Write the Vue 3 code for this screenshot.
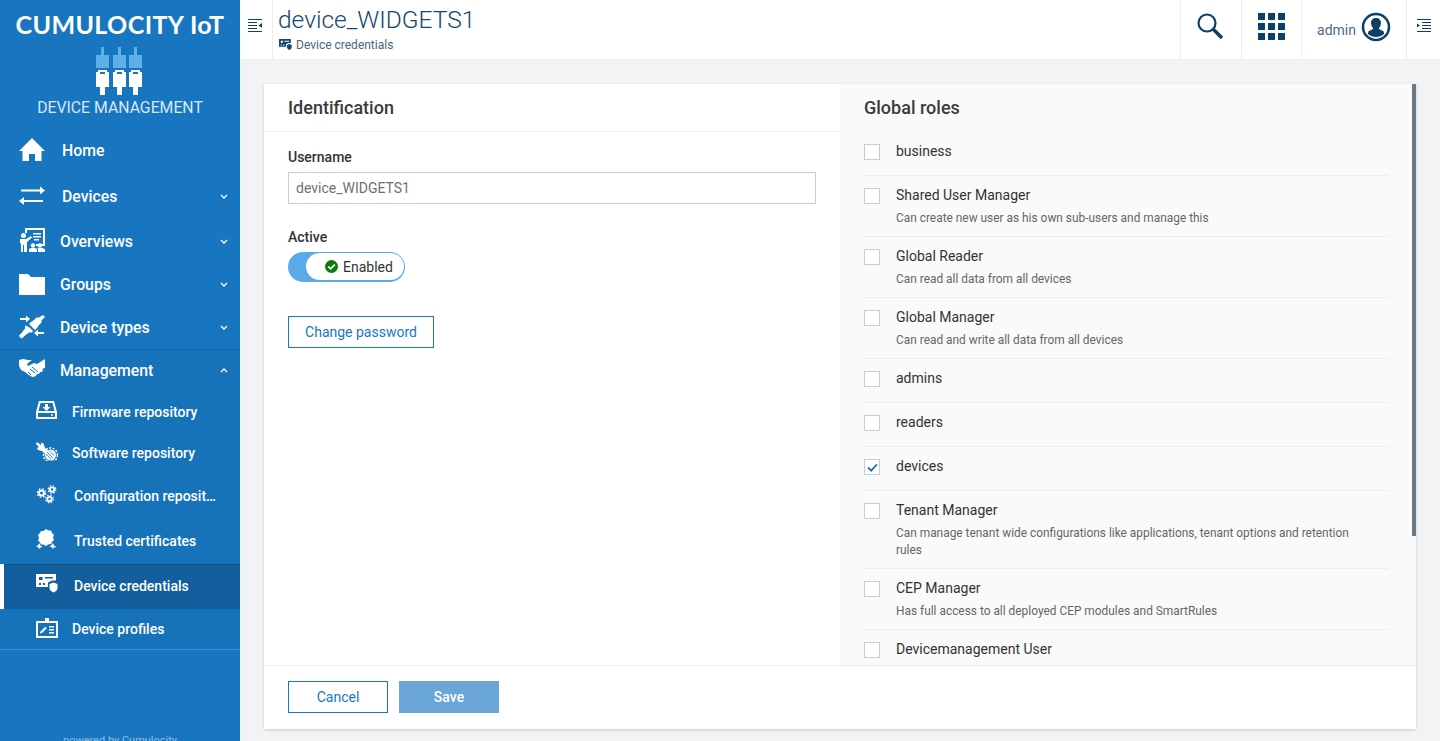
<script setup>
const card = '<path fill-rule="evenodd" d="M0 0h20v6.500h-4l-4 2V13H0zM3 3v3h3.500V3zM9 3v1.500h8V3zM3 9v2h2V9zM7 9v2h2V9z"/><path d="M13.500 10l4-1.500 4 1.500v4c0 2-2 3.500-4 4.500-2-1-4-2.500-4-4.500z"/>'

const icons = {
  home: '<path d="M13 1 26 14h-3.500v10h-6.500v-7h-6v7H3.500V14H0z"/>',
  devices: '<path d="M2 6.500h19V3.500l5 4-5 4V8.500H2zM24 17H5v-3l-5 4 5 4v-3h19z"/>',
  overviews: '<path d="M6 0h20v18h-9v-2h7V2H8v3H6z"/><path d="M14 5h8v1.500h-8zM14 8h8v1.500h-8zM15 11h5v1.500h-5z"/><circle cx="4.500" cy="7.500" r="2.500"/><path d="M1 11h6l5-3 1 1.500-5 4.500v10H5v-7H4v7H2v-9l-1 1z"/><circle cx="14" cy="17.500" r="2.200"/><circle cx="21" cy="17.500" r="2.200"/><path d="M10 24v-3l2-1h4l2 1v3zM19 24v-3l-1-.500 2-.500h3l3 1v3z"/>',
  groups: '<path d="M0 3h9l3 3h14v18H0z"/>',
  types: '<path d="M24 1l2 2-4 4 1 1-3 3-2 3-2 2-6-6 2-2 3-2 3-3 1 1zM10 13l4 4-1 1.500-3 0-4 3-3 3-2-1-1-2 3-3 3-4 0-3z"/><path d="M1 4h6V1.500l4 3.500-4 3.500V6H1zM25 20h-6v2.500l-4-3.500 4-3.500V18h6z"/>',
  handshake: '<path d="M0 3l4-1 5 1 4 0-5 4 1 2 6-3 3 1 8-5v9l-3 1 1 1-1 2-2 0-1 2-2 0-1 2-3 1-3-1-5-4-4-2-2-4z"/><path d="M11 12l5 4M13 10l6 5M9 15l3 3" fill="none" stroke="#1672B9" stroke-width="1"/>',
  firmware: '<path d="M3 1h15l3 11v7H0v-7zM4.500 3 2.500 11h16l-2-8zM2 13v4h17v-4z" fill-rule="evenodd"/><path d="M9 4h3v3h2.500l-4 4-4-4H9z"/><circle cx="16" cy="15" r="1"/>',
  software: '<path d="M1 1l4 3 .5-2.500 2 1L9 7l4 4-3 3-4-4-4-1-1-2 2-1-3-3z"/><circle cx="14.500" cy="14" r="5.500"/><circle cx="14.500" cy="14" r="7" fill="none" stroke="#fff" stroke-width="1.500" stroke-dasharray="2 1.500"/><path d="M11 11l6 6M13 9.500l5 5M10 13l5 5" fill="none" stroke="#1672B9" stroke-width=".8"/>',
  config: '<g fill="none" stroke="#fff"><circle cx="5.500" cy="9" r="2.500" stroke-width="2"/><circle cx="5.500" cy="9" r="4.200" stroke-width="1.300" stroke-dasharray="1.700 1.600"/><circle cx="16" cy="5.500" r="2.200" stroke-width="1.800"/><circle cx="16" cy="5.500" r="3.800" stroke-width="1.200" stroke-dasharray="1.600 1.400"/><circle cx="13.500" cy="15" r="2.200" stroke-width="1.800"/><circle cx="13.500" cy="15" r="3.800" stroke-width="1.200" stroke-dasharray="1.600 1.400"/></g>',
  trusted: '<path d="M10 0l2.500 1.500 2.500 0 1 2.500 2 2-1 2.500 1 2.500-2 2-1 2-3 .5-2 1.500-2.500-1.500-2.500 0-1-2-2-2 1-3-1-2.500 2-2 1-2 2.500 0z"/><path d="M3 14l1.500 2.500 2 1.500-2 .5-1.500 1.500-1-2-2.500-.5 2.500-1zM17 14l1 2.500 2.500 1.500-2.500.5-1 1.500-1.500-2-2-.5 2-1.500z"/>',
  credentials: card,
  profiles: '<path d="M9 0h4v3h9v17H0V3h9zM2 5v13h18V5z" fill-rule="evenodd"/><path d="M4 14l5-5 2 1-5 5-2 .500zM13 8h5v1.500h-5zM13 11h5v1.500h-5zM13 14h5v1.500h-5z"/>'
}

const topNav = [
  { name: 'Home', icon: 'home', size: 'tall', wide: true },
  { name: 'Devices', icon: 'devices', size: 'taller', wide: true, arrow: 'down' },
  { name: 'Overviews', icon: 'overviews', size: 'mid', arrow: 'down' },
  { name: 'Groups', icon: 'groups', size: 'mid', arrow: 'down' },
  { name: 'Device types', icon: 'types', size: 'mid', arrow: 'down' }
]

const subNav = [
  { name: 'Firmware repository', icon: 'firmware', size: 'low' },
  { name: 'Software repository', icon: 'software', size: 'low' },
  { name: 'Configuration repository', icon: 'config', size: 'big', wide: true },
  { name: 'Trusted certificates', icon: 'trusted', size: 'big', wide: true },
  { name: 'Device credentials', icon: 'credentials', size: 'big', wide: true, active: true },
  { name: 'Device profiles', icon: 'profiles', size: 'end' }
]

const roles = [
  { name: 'business' },
  { name: 'Shared User Manager', desc: 'Can create new user as his own sub-users and manage this' },
  { name: 'Global Reader', desc: 'Can read all data from all devices' },
  { name: 'Global Manager', desc: 'Can read and write all data from all devices' },
  { name: 'admins' },
  { name: 'readers' },
  { name: 'devices', checked: true },
  { name: 'Tenant Manager', desc: 'Can manage tenant wide configurations like applications, tenant options and retention rules' },
  { name: 'CEP Manager', desc: 'Has full access to all deployed CEP modules and SmartRules' },
  { name: 'Devicemanagement User' }
]
</script>

<template>
  <div class="app">
    <aside class="sidebar">
      <div class="brand">
        <div class="brand-name">CUMULOCITY IoT</div>
        <svg class="brand-icon" viewBox="0 0 48 48" width="48" height="48">
          <g v-for="x in [0, 17, 33]" :key="x" :transform="`translate(${x} 0)`">
            <path fill="#5EAEEA" d="M5 0h3v8h5v13H0V8h5z" />
            <path fill="#fff" d="M2 23h9v2h2v15H9v8H4v-8H0V25h2zM4 25v2h5v-2z" fill-rule="evenodd" />
          </g>
        </svg>
        <div class="brand-sub">DEVICE MANAGEMENT</div>
      </div>

      <nav>
        <a v-for="item in topNav" :key="item.name" class="nav-item" :class="[item.size, { wide: item.wide }]">
          <svg class="nav-icon" viewBox="0 0 26 25" v-html="icons[item.icon]"></svg>
          <span class="nav-label">{{ item.name }}</span>
          <svg v-if="item.arrow" class="chevron" viewBox="0 0 8 5"><path d="M1 1l3 3 3-3" /></svg>
        </a>

        <div class="nav-group">
          <a class="nav-item group-head">
            <svg class="nav-icon" viewBox="0 0 26 25" v-html="icons.handshake"></svg>
            <span class="nav-label">Management</span>
            <svg class="chevron" viewBox="0 0 8 5"><path d="M1 4l3-3 3 3" /></svg>
          </a>
          <a
            v-for="item in subNav"
            :key="item.name"
            class="nav-item sub"
            :class="[item.size, { wide: item.wide, active: item.active }]"
          >
            <svg class="nav-icon" viewBox="0 0 22 20" v-html="icons[item.icon]"></svg>
            <span class="nav-label">{{ item.name }}</span>
          </a>
        </div>
      </nav>

      <div class="powered">powered by Cumulocity</div>
    </aside>

    <div class="main">
      <header class="topbar">
        <button class="bar-toggle">
          <svg viewBox="0 0 14 13" width="14" height="13">
            <path d="M0 0h14v1H0zM0 3h9v1H0zM0 6h9v1H0zM0 9h9v1H0zM0 12h14v1H0zM14 4v5l-3.500-2.500z" />
          </svg>
        </button>
        <div class="title-block">
          <h1>device_WIDGETS1</h1>
          <div class="crumb">
            <svg viewBox="0 0 22 20" width="13" height="12" v-html="icons.credentials"></svg>
            <span>Device credentials</span>
          </div>
        </div>
        <div class="bar-cell search-cell">
          <svg viewBox="0 0 28 28" width="28" height="28">
            <circle cx="11" cy="11" r="8.500" fill="none" stroke="#0F3F66" stroke-width="2.200" />
            <path d="M17 17l9 9" stroke="#0F3F66" stroke-width="3.600" />
          </svg>
        </div>
        <div class="bar-cell apps-cell">
          <svg viewBox="0 0 27 27" width="27" height="27">
            <template v-for="row in [0, 10, 20]" :key="row">
              <rect v-for="col in [0, 10, 20]" :key="col" :x="col" :y="row" width="7" height="7" fill="#0F3F66" />
            </template>
          </svg>
        </div>
        <div class="bar-cell user-cell">
          <span>admin</span>
          <svg viewBox="0 0 30 30" width="30" height="30">
            <circle cx="15" cy="15" r="13" fill="none" stroke="#0F3F66" stroke-width="2.500" />
            <path fill="#0F3F66" d="M15 6c3 0 5 2 5 5 0 2-1 4-2 5l0 1 4 2c1 .5 1 1.500 1 3-2 2-5 3-8 3s-6-1-8-3c0-1.500 0-2.500 1-3l4-2 0-1c-1-1-2-3-2-5 0-3 2-5 5-5z" />
          </svg>
        </div>
        <div class="bar-cell right-toggle">
          <svg viewBox="0 0 14 13" width="14" height="13">
            <path d="M0 0h14v1H0zM5 3h9v1H5zM5 6h9v1H5zM5 9h9v1H5zM0 12h14v1H0zM0 4.500v4l3-2z" />
          </svg>
        </div>
      </header>

      <div class="content">
        <section class="card">
          <div class="card-body">
            <div class="col-left">
              <h2>Identification</h2>
              <form class="form" @submit.prevent>
                <label>Username</label>
                <input type="text" value="device_WIDGETS1" />
                <label class="active-label">Active</label>
                <div class="switch">
                  <div class="thumb">
                    <svg viewBox="0 0 12 12" width="13" height="13">
                      <circle cx="6" cy="6" r="6" fill="#0B7A0B" />
                      <path d="M3 6l2.200 2.200L9 4.200" fill="none" stroke="#fff" stroke-width="1.600" />
                    </svg>
                    <span>Enabled</span>
                  </div>
                </div>
                <button class="btn change">Change password</button>
              </form>
            </div>

            <div class="col-right">
              <h2>Global roles</h2>
              <div class="roles">
                <div v-for="role in roles" :key="role.name" class="role">
                  <span class="box">
                    <svg v-if="role.checked" viewBox="0 0 12 10" width="11" height="9">
                      <path d="M1 5l3.500 3.500L11 1.500" fill="none" stroke="#1776BF" stroke-width="2" />
                    </svg>
                  </span>
                  <div class="role-text">
                    <div class="role-name">{{ role.name }}</div>
                    <div v-if="role.desc" class="role-desc">{{ role.desc }}</div>
                  </div>
                </div>
              </div>
            </div>
            <div class="scroll-thumb"></div>
          </div>

          <footer class="card-foot">
            <button class="btn">Cancel</button>
            <button class="btn save">Save</button>
          </footer>
        </section>
      </div>
    </div>
  </div>
</template>

<style>
html,
body {
  margin: 0;
  overflow: hidden;
}
</style>

<style scoped>
.app {
  display: flex;
  width: 1440px;
  height: 741px;
  overflow: hidden;
  font-family: Roboto, "Liberation Sans", sans-serif;
  background: #f2f3f4;
}

.sidebar {
  flex: 0 0 240px;
  display: flex;
  flex-direction: column;
  background: #1776bf;
  color: #fff;
}
.sidebar > * {
  flex-shrink: 0;
}
.brand {
  display: flex;
  flex-direction: column;
  align-items: center;
  height: 127px;
}
.brand-name {
  margin-top: 9px;
  font-family: Lato, sans-serif;
  font-size: 25px;
  font-weight: 700;
  line-height: 30px;
  letter-spacing: 0.4px;
  white-space: nowrap;
}
.brand-icon {
  margin-top: 8px;
}
.brand-sub {
  margin-top: 3px;
  font-size: 15.8px;
  font-weight: 400;
  line-height: 20px;
  color: #d8e8f6;
}

.nav-item {
  position: relative;
  box-sizing: border-box;
  display: grid;
  grid-template-columns: 60px 1fr 20px;
  align-items: center;
  font-size: 15.8px;
  font-weight: 500;
}
.nav-item.wide {
  grid-template-columns: 62px 1fr 20px;
}
.nav-item.tall {
  height: 46px;
}
.nav-item.taller {
  height: 47px;
  padding-bottom: 1px;
}
.nav-item.mid {
  height: 43px;
}
.nav-item.group-head {
  height: 42px;
  padding-bottom: 2px;
}
.nav-icon {
  width: 26px;
  height: 25px;
  margin: -2px 0 0 19px;
  fill: #fff;
}
.nav-label {
  white-space: nowrap;
  overflow: hidden;
  text-overflow: ellipsis;
}
.chevron {
  width: 8px;
  height: 5px;
  fill: none;
  stroke: #fff;
  stroke-width: 1.4;
}
.nav-group {
  border-top: 1px solid #1569aa;
  border-bottom: 1px solid #3f8fce;
  background: #1672b9;
}
.nav-item.sub {
  grid-template-columns: 72px 1fr;
  font-size: 14px;
  padding: 0 24px 2px 0;
}
.nav-item.sub.wide {
  grid-template-columns: 74px 1fr;
}
.nav-item.sub .nav-icon {
  width: 22px;
  height: 20px;
  margin: -3px 0 0 36px;
}
.nav-item.low {
  height: 41px;
}
.nav-item.big {
  height: 45px;
}
.nav-item.sub.end {
  height: 40px;
  padding-bottom: 0;
}
.nav-item.active {
  background: #135f9e;
  box-shadow: inset 0 1px 0 #0f5187;
}
.nav-item.active::before {
  content: "";
  position: absolute;
  left: 0;
  top: 0;
  bottom: 0;
  width: 4px;
  background: #fff;
}
.powered {
  margin-top: 84px;
  text-align: center;
  font-size: 11px;
  line-height: 14px;
  color: #8dbde3;
}

.main {
  flex: 1;
  display: flex;
  flex-direction: column;
  min-width: 0;
}
.topbar {
  display: flex;
  flex: 0 0 60px;
  background: #fff;
  border-bottom: 1px solid #eceef0;
  box-sizing: border-box;
}
.bar-toggle {
  flex: 0 0 33px;
  display: flex;
  align-items: center;
  justify-content: center;
  padding: 0 2px 8px 0;
  border: 0;
  border-right: 1px solid #eceef0;
  background: #fff;
}
.bar-toggle svg,
.right-toggle svg {
  fill: #0f3f66;
}
.title-block {
  flex: 1;
  padding-left: 5px;
}
h1 {
  margin: 5px 0 0;
  font-size: 24.5px;
  font-weight: 300;
  line-height: 30px;
  color: #14466e;
}
.crumb {
  display: flex;
  align-items: center;
  gap: 4px;
  margin-top: 2px;
  padding-left: 1px;
  font-size: 12px;
  line-height: 16px;
  color: #4a6478;
}
.crumb svg {
  fill: #14466e;
}
.bar-cell {
  display: flex;
  align-items: center;
  justify-content: center;
  box-sizing: border-box;
  border-left: 1px solid #eceef0;
}
.search-cell {
  flex: 0 0 61px;
  padding: 0 2px 7px 0;
}
.apps-cell {
  flex: 0 0 60px;
  padding-bottom: 7px;
}
.user-cell {
  flex: 0 0 105px;
  gap: 5px;
  font-size: 14px;
  color: #4a6a84;
}
.user-cell svg {
  margin-bottom: 5px;
}
.right-toggle {
  flex: 0 0 34px;
  padding-bottom: 8px;
}

.content {
  flex: 1;
  min-height: 0;
  padding: 24px 24px 12px;
}
.card {
  display: flex;
  flex-direction: column;
  height: 645px;
  background: #fff;
  border-radius: 2px;
  box-shadow: 0 1px 3px rgba(0, 0, 0, 0.18);
}
.card-body {
  position: relative;
  flex: 1;
  display: flex;
  min-height: 0;
}
.col-left,
.col-right {
  flex: 0 0 576px;
  box-sizing: border-box;
  overflow: hidden;
}
.col-right {
  background: #fafafa;
}
h2 {
  margin: 0;
  padding: 0 24px;
  height: 47px;
  font-size: 18px;
  font-weight: 500;
  line-height: 48px;
  color: #3a3a3a;
  box-sizing: border-box;
}
.col-left h2 {
  border-bottom: 1px solid #f0f0f0;
  height: 48px;
}
.form {
  display: flex;
  flex-direction: column;
  align-items: flex-start;
  padding: 16px 24px 0;
}
label {
  font-size: 14px;
  font-weight: 500;
  line-height: 18px;
  color: #333;
}
input {
  box-sizing: border-box;
  width: 528px;
  height: 32px;
  margin-top: 6px;
  padding: 0 7px;
  border: 1px solid #ccc;
  font: 400 14px Roboto, sans-serif;
  color: #707070;
  outline: none;
}
.active-label {
  margin-top: 24px;
}
.switch {
  box-sizing: border-box;
  width: 117px;
  height: 30px;
  margin-top: 6px;
  padding: 1px 1px 2px 18px;
  border-radius: 15px;
  background: #5aa9e8;
}
.thumb {
  display: flex;
  align-items: center;
  gap: 5px;
  height: 100%;
  padding-left: 19px;
  border-radius: 14px;
  background: #fff;
  font-size: 14px;
  color: #333;
}
.btn {
  box-sizing: border-box;
  width: 100px;
  height: 32px;
  padding: 0 0 1px;
  border: 1px solid #1776bf;
  border-radius: 0;
  background: #fff;
  font: 400 14px Roboto, sans-serif;
  color: #1776bf;
}
.change {
  width: 146px;
  margin-top: 34px;
}

.roles {
  padding: 0 28px 0 24px;
}
.role {
  display: flex;
  padding: 10px 0 13px;
  border-bottom: 1px solid #eee;
}
.role:first-child {
  padding-top: 11px;
}
.box {
  box-sizing: border-box;
  flex: 0 0 16px;
  display: flex;
  align-items: center;
  justify-content: center;
  height: 16px;
  margin-top: 2px;
  border: 1px solid #ccc;
  background: #fff;
}
.role-text {
  margin-left: 16px;
  min-width: 0;
  padding-right: 20px;
}
.role-name {
  margin: -1px 0 1px;
  font-size: 14px;
  line-height: 20px;
  color: #333;
}
.role-desc {
  margin: 5px 0 -4px;
  font-size: 11.9px;
  line-height: 17px;
  color: #666;
}
.scroll-thumb {
  position: absolute;
  top: 0;
  right: 0;
  width: 4px;
  height: 452px;
  background: #6b7885;
}

.card-foot {
  flex: 0 0 64px;
  display: flex;
  align-items: center;
  gap: 11px;
  box-sizing: border-box;
  padding: 0 24px 1px;
  border-top: 1px solid #eee;
  background: #fff;
}
.save {
  border: 0;
  background: #69a5d7;
  color: #fff;
  font-weight: 500;
}
</style>
